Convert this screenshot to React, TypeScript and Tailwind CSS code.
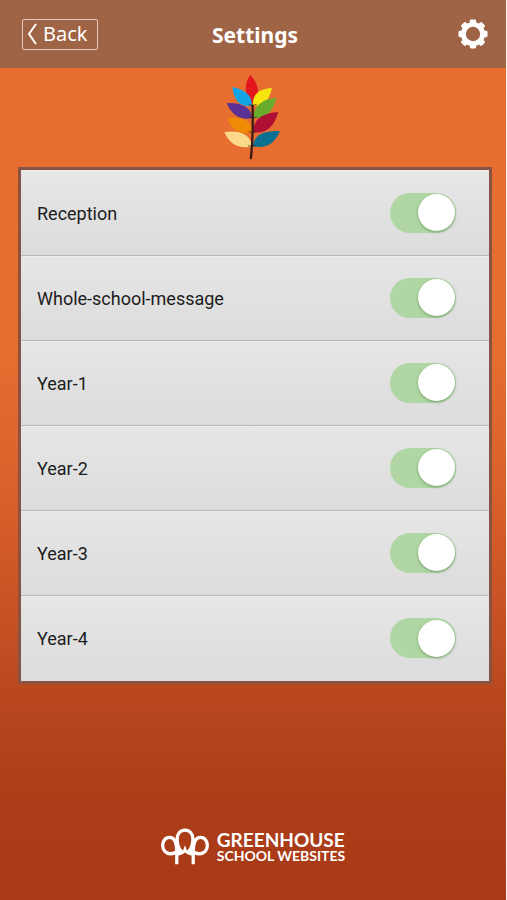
import { useState } from "react";

const groups = [
  "Reception",
  "Whole-school-message",
  "Year-1",
  "Year-2",
  "Year-3",
  "Year-4",
];

const gearTeeth = [
  "rotate(0 15 15)",
  "rotate(45 15 15)",
  "rotate(90 15 15)",
  "rotate(135 15 15)",
];

function GearIcon() {
  return (
    <svg viewBox="0 0 30 30" className="size-[30px]" aria-hidden="true">
      <mask id="gear-hole">
        <rect width="30" height="30" fill="#fff" />
        <circle cx="15" cy="15" r="7.2" fill="#000" />
      </mask>
      <g fill="#fff" mask="url(#gear-hole)">
        <circle cx="15" cy="15" r="12" />
        {gearTeeth.map((transform) => (
          <rect key={transform} x="11.8" y="0.5" width="6.4" height="29" rx="1.4" transform={transform} />
        ))}
      </g>
    </svg>
  );
}

function SchoolLogo() {
  return (
    <svg viewBox="-6 6 270 297" className="h-[99px] w-[90px]" role="img" aria-label="School logo">
      <path d="M121 26C100 54 104 92 126 118C150 92 152 62 121 26Z" fill="#e3151d" />
      <path d="M67 63C72 108 94 124 126 119C126 87 106 72 67 63Z" fill="#12a5e5" />
      <path d="M186 66C144 68 126 88 129 119C162 121 177 104 186 66Z" fill="#f6e50f" />
      <path d="M50 111C64 148 94 164 127 156C122 122 97 110 50 111Z" fill="#5b3294" />
      <path d="M200 95C153 99 131 122 130 156C169 159 187 138 200 95Z" fill="#69ab2d" />
      <path d="M52 157C62 192 92 208 127 199C123 160 96 151 52 157Z" fill="#ef8a05" />
      <path d="M205 138C154 142 130 160 130 199C172 203 191 182 205 138Z" fill="#b00f35" />
      <path d="M43 198C58 236 91 251 127 241C120 203 89 192 43 198Z" fill="#fbd98a" />
      <path d="M210 195C154 193 133 209 128 241C169 248 194 234 210 195Z" fill="#0b7190" />
      <path
        d="M127 119L116 115M127 119L140 115M128 156L116 153M128 156L141 153M128 199L116 197M128 199L140 197M126 241L114 239M126 241L138 239"
        fill="none"
        stroke="#3a1a14"
        strokeWidth="2"
      />
      <path d="M124 116L131 116C133 170 131 230 126 280L119 279C125 225 126 170 124 116Z" fill="#3a1a14" />
    </svg>
  );
}

function TreesIcon() {
  return (
    <svg viewBox="0 0 146 112" className="h-[37px] w-12" fill="none" stroke="#fff" strokeWidth="10" aria-hidden="true">
      <path d="M48 110V72C48 42 41 28 26 28C12 28 5 41 5 53C5 68 15 78 28 78C41 78 51 72 61 62" />
      <path d="M98 110V72C98 42 105 28 120 28C134 28 141 41 141 53C141 68 131 78 118 78C105 78 95 72 85 62" />
      <path d="M48 79C60 79 71 71 73 66C75 71 86 79 98 79" />
      <path d="M61 72C52 60 49 46 49 33C49 17 59 6 73 6C87 6 97 17 97 33C97 46 94 60 85 72" />
    </svg>
  );
}

function Toggle({ id }: { id: string }) {
  const [checked, setChecked] = useState(true);

  return (
    <input
      id={id}
      type="checkbox"
      role="switch"
      checked={checked}
      onChange={(e) => setChecked(e.target.checked)}
      className="mb-0.5 flex h-10 w-[66px] cursor-pointer appearance-none items-center rounded-full bg-[#bdbdbd] px-px before:size-[37px] before:rounded-full before:bg-white before:shadow-[0_1px_3px_rgba(60,110,60,0.55)] checked:justify-end checked:bg-[#b0d7a3]"
    />
  );
}

export default function App() {
  return (
    <div className="flex min-h-screen flex-col border-r border-[#fdf3ee] bg-[linear-gradient(to_bottom,#e86e30_0%,#e66d30_40%,#d96029_55%,#cb5426_66%,#b9481f_77%,#ab3d18_89%,#a83a17_100%)] font-['Noto_Sans',sans-serif]">
      {/* Top bar */}
      <header className="grid h-[68px] grid-cols-[1fr_auto_1fr] items-center bg-[#9e6445] pr-[18px] pl-[22px] text-white">
        <button
          type="button"
          className="flex h-[31px] w-[76px] items-center gap-1.5 rounded-xs border border-[#e3cabd] pl-1 text-xl leading-7"
        >
          <svg viewBox="0 0 10 22" className="h-[22px] w-2.5" fill="none" stroke="#fff" strokeWidth="2" aria-hidden="true">
            <path d="M9 1L2 11L9 21" />
          </svg>
          Back
        </button>
        <h1 className="pt-0.5 text-[21px] leading-7 font-bold">Settings</h1>
        <button type="button" aria-label="Settings" className="justify-self-end">
          <GearIcon />
        </button>
      </header>

      <div className="flex justify-center">
        <SchoolLogo />
      </div>

      {/* Message groups */}
      <main className="mr-3.5 ml-[18px] border-3 border-[#875443]">
        <ul className="bg-[#ececec] pt-px">
          {groups.map((group) => (
            <li
              key={group}
              className="flex h-[85px] items-center justify-between border-t border-[#ececec] bg-linear-to-b from-[#e6e6e6] to-[#dbdcdb] pr-[33px] pl-4 not-last:border-b not-last:border-b-[#b9b9b9]"
            >
              <label htmlFor={group} className="font-[Roboto,sans-serif] text-lg text-[#1c1c1c]">
                {group}
              </label>
              <Toggle id={group} />
            </li>
          ))}
        </ul>
      </main>

      <footer className="mt-auto flex items-center justify-center gap-2 pt-8 pb-[35px] font-[Lato,sans-serif] text-white">
        <TreesIcon />
        <p className="font-bold">
          <span className="block text-[19px] leading-[18px]">GREENHOUSE</span>
          <span className="block text-sm leading-[14px]">SCHOOL WEBSITES</span>
        </p>
      </footer>
    </div>
  );
}
